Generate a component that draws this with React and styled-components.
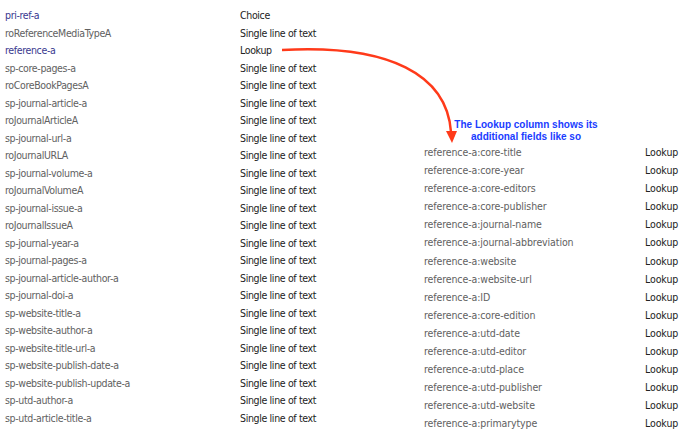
import React from "react";
import styled, { createGlobalStyle } from "styled-components";

const GlobalStyle = createGlobalStyle`
  html, body {
    margin: 0;
    padding: 0;
    background: #fff;
  }
  body {
    font-family: "DejaVu Sans Condensed", "DejaVu Sans", Verdana, sans-serif;
    font-stretch: condensed;
  }
`;

const fields = [
  { name: "pri-ref-a", type: "Choice", link: true },
  { name: "roReferenceMediaTypeA", type: "Single line of text" },
  { name: "reference-a", type: "Lookup", link: true },
  { name: "sp-core-pages-a", type: "Single line of text" },
  { name: "roCoreBookPagesA", type: "Single line of text" },
  { name: "sp-journal-article-a", type: "Single line of text" },
  { name: "roJournalArticleA", type: "Single line of text" },
  { name: "sp-journal-url-a", type: "Single line of text" },
  { name: "roJournalURLA", type: "Single line of text" },
  { name: "sp-journal-volume-a", type: "Single line of text" },
  { name: "roJournalVolumeA", type: "Single line of text" },
  { name: "sp-journal-issue-a", type: "Single line of text" },
  { name: "roJournalIssueA", type: "Single line of text" },
  { name: "sp-journal-year-a", type: "Single line of text" },
  { name: "sp-journal-pages-a", type: "Single line of text" },
  { name: "sp-journal-article-author-a", type: "Single line of text" },
  { name: "sp-journal-doi-a", type: "Single line of text" },
  { name: "sp-website-title-a", type: "Single line of text" },
  { name: "sp-website-author-a", type: "Single line of text" },
  { name: "sp-website-title-url-a", type: "Single line of text" },
  { name: "sp-website-publish-date-a", type: "Single line of text" },
  { name: "sp-website-publish-update-a", type: "Single line of text" },
  { name: "sp-utd-author-a", type: "Single line of text" },
  { name: "sp-utd-article-title-a", type: "Single line of text" },
];

const lookups = [
  "core-title",
  "core-year",
  "core-editors",
  "core-publisher",
  "journal-name",
  "journal-abbreviation",
  "website",
  "website-url",
  "ID",
  "core-edition",
  "utd-date",
  "utd-editor",
  "utd-place",
  "utd-publisher",
  "utd-website",
  "primarytype",
];

const Page = styled.div`
  position: relative;
  display: flex;
  width: 690px;
  height: 436px;
  overflow: hidden;
`;

const FieldTable = styled.div`
  display: grid;
  grid-template-columns: 235px auto;
  grid-auto-rows: 17.5px;
  align-content: start;
  width: 419px;
  padding: 7px 0 0 5px;
  font-size: 10.5px;
  letter-spacing: -0.35px;
`;

const Cell = styled.div`
  line-height: 17.5px;
  white-space: nowrap;
  color: ${(p) => (p.$dark ? "#222" : p.$link ? "#39398f" : "#616161")};
`;

const LookupPanel = styled.div`
  display: flex;
  flex-direction: column;
  padding-top: 119px;
  flex: 1;
`;

const Note = styled.div`
  width: 204px;
  text-align: center;
  font-family: "Liberation Sans", Arial, sans-serif;
  font-stretch: normal;
  font-weight: bold;
  font-size: 10px;
  line-height: 12px;
  color: #1a3cff;
`;

const LookupRows = styled.div`
  display: grid;
  grid-template-columns: 221px auto;
  grid-auto-rows: 18.1px;
  font-size: 10.5px;
  letter-spacing: -0.1px;

  & > div {
    line-height: 18.1px;
  }
`;

const Arrow = styled.svg`
  position: absolute;
  inset: 0;
  pointer-events: none;
`;

export default function App() {
  return (
    <>
      <GlobalStyle />
      <Page>
        <FieldTable>
          {fields.map((f) => (
            <React.Fragment key={f.name}>
              <Cell $link={f.link}>{f.name}</Cell>
              <Cell $dark>{f.type}</Cell>
            </React.Fragment>
          ))}
        </FieldTable>
        <LookupPanel>
          <Note>
            The Lookup column shows its
            <br />
            additional fields like so
          </Note>
          <LookupRows>
            {lookups.map((l) => (
              <React.Fragment key={l}>
                <Cell>reference-a:{l}</Cell>
                <Cell $dark>Lookup</Cell>
              </React.Fragment>
            ))}
          </LookupRows>
        </LookupPanel>
        <Arrow width="690" height="436" viewBox="0 0 690 436">
          <path
            d="M282 50 C 390 44 447 75 451 132"
            fill="none"
            stroke="#ff3a1a"
            strokeWidth="2.5"
          />
          <polygon points="446,131 457,131 452,143" fill="#ff3a1a" />
        </Arrow>
      </Page>
    </>
  );
}
